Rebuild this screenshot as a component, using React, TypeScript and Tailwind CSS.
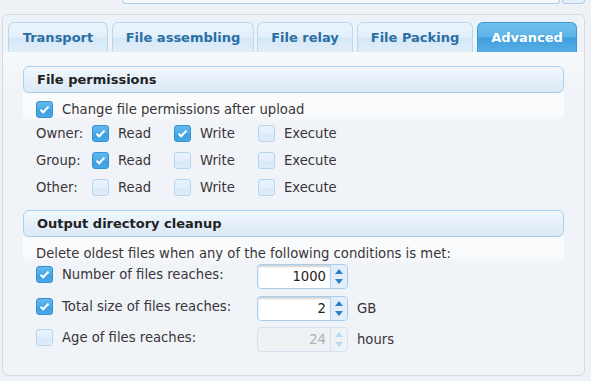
import React from 'react'

const font = { fontFamily: '"DejaVu Sans", Verdana, sans-serif' }

function Check({ on, disabled }: { on?: boolean; disabled?: boolean }) {
  return (
    <span
      className={`flex h-[17px] w-[17px] shrink-0 items-center justify-center rounded-[3px] border ${
        on
          ? 'border-[#3590d2] bg-[linear-gradient(#63b8ec,#4eabe6_50%,#3d9fe0_52%,#4aa8e5)]'
          : 'border-[#b6d5ef] bg-[linear-gradient(#e9f3fc,#e3effa_50%,#d8e9f7_52%,#e0edf9)]'
      } ${disabled ? 'opacity-70' : ''}`}
    >
      {on && (
        <svg width="11" height="9" viewBox="0 0 11 9">
          <path d="M1.5 4.8 L4.2 7.3 L9.5 1.6" fill="none" stroke="white" strokeWidth="2" />
        </svg>
      )}
    </span>
  )
}

function Perm({ on, label, w }: { on?: boolean; label: string; w: string }) {
  return (
    <div className={`flex items-center gap-[9px] ${w}`}>
      <Check on={on} />
      <span>{label}</span>
    </div>
  )
}

function Spin({ value, disabled }: { value: string; disabled?: boolean }) {
  return (
    <div
      className={`flex h-[25px] w-[91px] overflow-hidden rounded-[4px] border ${
        disabled ? 'border-[#d3e2ee] bg-[#eff2f5]' : 'border-[#a8cdea] bg-white'
      }`}
    >
      <div
        className={`flex flex-1 items-center justify-end pr-[4px] ${
          disabled ? 'text-[#b0b0b0]' : 'text-[#222] shadow-[inset_0_2px_2px_rgba(0,0,0,0.18)]'
        }`}
      >
        {value}
      </div>
      <div
        className={`flex w-[17px] flex-col items-center justify-center gap-[5px] border-l ${
          disabled ? 'border-[#d3e2ee] bg-[#eef3f8]' : 'border-[#b6d5ef] bg-[#e2eef9]'
        }`}
      >
        <svg width="8" height="5" viewBox="0 0 8 5">
          <path d="M0 5 L4 0 L8 5 Z" fill={disabled ? '#bcd8ee' : '#2f7fc2'} />
        </svg>
        <svg width="8" height="5" viewBox="0 0 8 5">
          <path d="M0 0 L8 0 L4 5 Z" fill={disabled ? '#bcd8ee' : '#2f7fc2'} />
        </svg>
      </div>
    </div>
  )
}

function Header({ title }: { title: string }) {
  return (
    <div className="flex h-[27px] items-center rounded-[6px] border border-[#a9d0ef] bg-[linear-gradient(#f2f8fd,#e4eff9_55%,#dbe9f6)] pl-[13px] text-[13px] font-bold text-[#222]">
      {title}
    </div>
  )
}

const tabs = [
  { label: 'Transport', w: 'w-[100px]', ml: '' },
  { label: 'File assembling', w: 'w-[142px]', ml: 'ml-[4px]' },
  { label: 'File relay', w: 'w-[96px]', ml: 'ml-[3px]' },
  { label: 'File Packing', w: 'w-[116px]', ml: 'ml-[4px]' },
  { label: 'Advanced', w: 'w-[100px]', ml: 'ml-[4px]', active: true },
]

export default function App() {
  return (
    <div className="h-[381px] w-[591px] overflow-hidden bg-[#eef2f6] text-[13.2px] text-[#3a3538]" style={font}>
      {/* cut-off widget above */}
      <div className="flex h-[4px] pl-[122px] pr-[6px]">
        <div className="flex-1 rounded-b-[5px] border border-t-0 border-[#a9cdeb] bg-[#f7fafd]" />
        <div className="ml-[2px] w-[23px] rounded-b-[5px] border border-t-0 border-[#a9cdeb] bg-[#e6f0f9]" />
      </div>

      <div className="mx-[2px] mt-[10px] h-[362px] w-[583px] rounded-[6px] border border-[#d6dadf] bg-[#f0f3f7]">
        {/* tab strip */}
        <div className="mr-[6px] ml-[1px] mt-[1px] flex h-[36px] items-end rounded-t-[5px] rounded-br-[5px] bg-[#ecf2f8] pl-[4px]">
          {tabs.map(t => (
            <div
              key={t.label}
              className={`flex h-[30px] items-center justify-center rounded-t-[6px] border border-b-0 text-[13px] font-bold ${t.w} ${t.ml} ${
                t.active
                  ? 'border-[#3d98d8] bg-[linear-gradient(#72c0ec,#5db4e8_48%,#3e9fdf_52%,#5aaee6)] text-white'
                  : 'border-[#b8d7f0] bg-[linear-gradient(#eaf4fc,#e3eff9_48%,#d5e7f6_52%,#e1eef9)] text-[#2a6fa5]'
              }`}
            >
              {t.label}
            </div>
          ))}
        </div>

        {/* content */}
        <div className="bg-[linear-gradient(#f7f9fb,#f0f3f7_40px)] pl-[20px] pr-[20px] pt-[14px]">
          <Header title="File permissions" />
          <div className="bg-[linear-gradient(#f9fbfc,#f9fbfc_20px,#f0f3f7_30px)] pl-[13px] pt-[8px]">
            <div className="flex h-[17px] items-center gap-[9px]">
              <Check on />
              <span>Change file permissions after upload</span>
            </div>
            {[
              { label: 'Owner:', r: true, w: true, x: false, mt: 'mt-[7px]' },
              { label: 'Group:', r: true, w: false, x: false, mt: 'mt-[10px]' },
              { label: 'Other:', r: false, w: false, x: false, mt: 'mt-[10px]' },
            ].map(row => (
              <div key={row.label} className={`flex h-[17px] items-center ${row.mt}`}>
                <span className="w-[56px]">{row.label}</span>
                <Perm on={row.r} label="Read" w="w-[82px]" />
                <Perm on={row.w} label="Write" w="w-[84px]" />
                <Perm on={row.x} label="Execute" w="w-[90px]" />
              </div>
            ))}
          </div>

          <div className="mt-[14px]">
            <Header title="Output directory cleanup" />
            <div className="bg-[linear-gradient(#f9fbfc,#f9fbfc_18px,#f0f3f7_28px)] pl-[13px] pt-[8px]">
              <div className="flex h-[17px] items-center">
                Delete oldest files when any of the following conditions is met:
              </div>
              {[
                { label: 'Number of files reaches:', on: true, value: '1000', unit: '', mt: 'mt-[2px]' },
                { label: 'Total size of files reaches:', on: true, value: '2', unit: 'GB', mt: 'mt-[7px]' },
                { label: 'Age of files reaches:', on: false, value: '24', unit: 'hours', mt: 'mt-[6px]', disabled: true },
              ].map(row => (
                <div key={row.label} className={`flex items-start ${row.mt}`}>
                  <div className="flex h-[21px] w-[221px] items-center gap-[9px]">
                    <Check on={row.on} />
                    <span>{row.label}</span>
                  </div>
                  <Spin value={row.value} disabled={row.disabled} />
                  {row.unit && <span className="ml-[9px] flex h-[25px] items-center">{row.unit}</span>}
                </div>
              ))}
            </div>
          </div>
        </div>
      </div>
    </div>
  )
}
